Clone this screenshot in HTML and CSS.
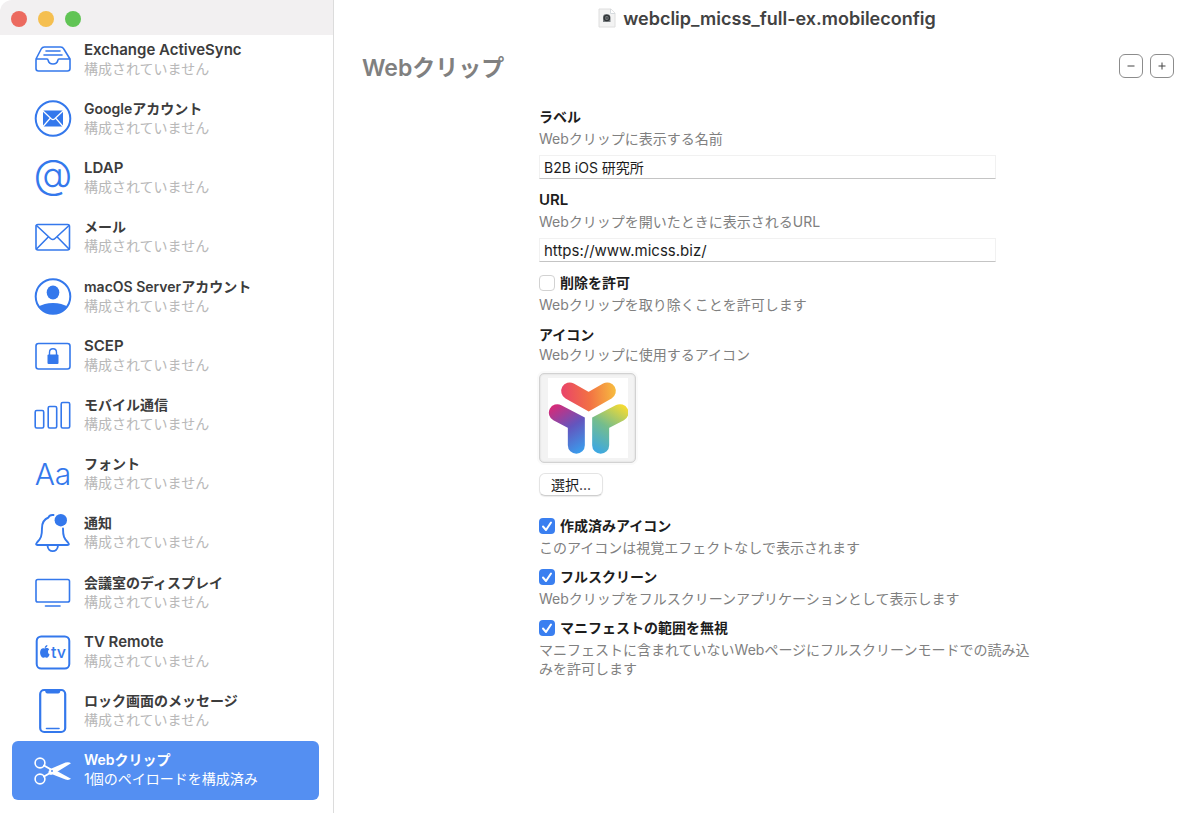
FILE: index.html
```
<!DOCTYPE html>
<html lang="ja">
<head>
  <meta charset="UTF-8" />
  <meta name="viewport" content="width=device-width, initial-scale=1.0" />
  <title>webclip_micss_full-ex.mobileconfig</title>
  <link rel="stylesheet" href="styles.css">
</head>
<body>
  <div class="window">
    <aside class="sidebar">
      <div class="titlebar">
        <button class="light close" aria-label="閉じる"></button>
        <button class="light minimize" aria-label="しまう"></button>
        <button class="light zoom" aria-label="拡大"></button>
      </div>
      <nav class="payloads">
        <a class="payload" href="#exchange">
          <svg class="icon" viewBox="0 0 40 46"><path d="M3 22L8.2 12Q9.2 10 11.4 10H27.6Q29.8 10 30.8 12L37 22V31.500Q37 34 34.500 34H5.500Q3 34 3 31.500V22H14Q15 22 15.200 23.500Q16 27 20 27Q24 27 24.800 23.500Q25 22 26 22H37M13 14H27M11 18H29"/></svg>
          <span class="text"><strong lang="en">Exchange ActiveSync</strong><small>構成されていません</small></span>
        </a>
        <a class="payload" href="#google">
          <svg class="icon" viewBox="0 0 40 46"><circle cx="20" cy="22.500" r="17.300" stroke-width="2"/><rect class="fill" x="10" y="14.500" width="20" height="16" rx="1"/><path class="knock" d="M10 15L18.500 23Q20 24.300 21.500 23L30 15M10 30.500L17 22.500M30 30.500L23 22.500"/></svg>
          <span class="text"><strong>Googleアカウント</strong><small>構成されていません</small></span>
        </a>
        <a class="payload" href="#ldap">
          <svg class="icon" viewBox="0 0 40 46"><text class="at" x="20" y="33" text-anchor="middle">@</text></svg>
          <span class="text"><strong lang="en">LDAP</strong><small>構成されていません</small></span>
        </a>
        <a class="payload" href="#mail">
          <svg class="icon" viewBox="0 0 40 46"><rect x="3" y="10.500" width="33.500" height="25.500" rx="2"/><path d="M3.500 11.500L17.500 24.500Q19.800 26.500 22 24.500L36 11.500M3.500 35L15.500 22.800M36 35L24 22.800"/></svg>
          <span class="text"><strong>メール</strong><small>構成されていません</small></span>
        </a>
        <a class="payload" href="#server">
          <svg class="icon" viewBox="0 0 40 46"><circle cx="20" cy="22.500" r="17.300" stroke-width="2"/><ellipse class="fill" cx="20" cy="18.500" rx="6.300" ry="7"/><path class="fill" d="M5.500 33C9 30.500 14 29 20 29S31 30.500 34.500 33C31 37.500 26 40 20 40S9 37.500 5.500 33Z"/></svg>
          <span class="text"><strong>macOS Serverアカウント</strong><small>構成されていません</small></span>
        </a>
        <a class="payload" href="#scep">
          <svg class="icon" viewBox="0 0 40 46"><rect x="3" y="10.500" width="34" height="25.500" rx="2.500"/><rect class="fill" x="14.500" y="21.500" width="11" height="9.500" rx="1"/><path stroke-width="1.400" d="M16.500 22V19.500C16.500 14.500 23.500 14.500 23.500 19.500V22"/></svg>
          <span class="text"><strong lang="en">SCEP</strong><small>構成されていません</small></span>
        </a>
        <a class="payload" href="#cellular">
          <svg class="icon" viewBox="0 0 40 46"><rect x="2.200" y="18.500" width="8.500" height="17.500" rx="1.500"/><rect x="15.200" y="14.500" width="8.500" height="21.500" rx="1.500"/><rect x="28.200" y="10.500" width="8.500" height="25.500" rx="1.500"/></svg>
          <span class="text"><strong>モバイル通信</strong><small>構成されていません</small></span>
        </a>
        <a class="payload" href="#font">
          <svg class="icon" viewBox="0 0 40 46"><text class="aa" x="20" y="34" text-anchor="middle">Aa</text></svg>
          <span class="text"><strong>フォント</strong><small>構成されていません</small></span>
        </a>
        <a class="payload" href="#notifications">
          <svg class="icon" viewBox="0 0 40 46"><path d="M20.500 5Q16.500 4.500 15.500 7.500C10.500 9.500 9 13.500 9 18C9 26 8 28.500 4 32.500Q2 35 4.500 35H34.500Q37 35 35 32.500C31 28.500 30 26 30 18.500M14.500 35.500C15 43 24.500 43 25 35.500" stroke-width="1.900"/><circle class="fill" cx="27.800" cy="10.200" r="6.200"/></svg>
          <span class="text"><strong>通知</strong><small>構成されていません</small></span>
        </a>
        <a class="payload" href="#display">
          <svg class="icon" viewBox="0 0 40 46"><rect x="3" y="9.500" width="33.500" height="22.500" rx="1.800"/><path d="M12.500 36H27"/></svg>
          <span class="text"><strong>会議室のディスプレイ</strong><small>構成されていません</small></span>
        </a>
        <a class="payload" href="#tvremote">
          <svg class="icon" viewBox="0 0 40 46"><rect x="3.700" y="7.500" width="32.600" height="32" rx="4.500" stroke-width="2"/><path class="fill" d="M11.800 19.500C13 18.800 15.200 18.800 16.200 20.300C14.400 21.700 14.600 24.500 16.600 25.500C15.900 27.400 14.800 29 13.500 28.700Q12 28 10.500 28.700C8.500 29.100 7 25.800 7.100 23.300C7.200 20 9.300 18.400 11.800 19.500ZM11.700 18.900C11.700 17.200 12.900 16 14.400 15.900C14.500 17.500 13.200 18.900 11.700 18.900Z"/><text class="tv" x="18" y="28.500">tv</text></svg>
          <span class="text"><strong lang="en">TV Remote</strong><small>構成されていません</small></span>
        </a>
        <a class="payload" href="#lockscreen">
          <svg class="icon" viewBox="0 0 40 46"><rect x="7.200" y="2" width="25" height="42" rx="4" stroke-width="2.200"/><path class="fill" d="M12 1.500H27.500Q27.500 5.500 25 5.500H14.500Q12 5.500 12 1.500Z"/><path d="M13.500 40.500H26"/></svg>
          <span class="text"><strong>ロック画面のメッセージ</strong><small>構成されていません</small></span>
        </a>
        <a class="payload selected" href="#webclip" aria-current="page">
          <svg class="icon" viewBox="0 0 40 46"><circle cx="7" cy="16" r="4.900"/><circle cx="7" cy="32" r="4.900"/><path d="M11 18.500L18 22.500M11 29.500L18 25.500" stroke-width="2"/><path class="fill" d="M15.500 27Q15 23.500 18.500 21.500L32.500 15.500Q36 14.500 38 16.200L23 25.500L18 28Z"/><path class="fill" d="M22 23L38 31.800Q36 33.600 32.500 32.600L18.500 27L15.500 21Z"/><circle class="dot" cx="19" cy="24" r="1"/></svg>
          <span class="text"><strong>Webクリップ</strong><small>1個のペイロードを構成済み</small></span>
        </a>
      </nav>
    </aside>

    <main class="main">
      <header class="doc-title">
        <svg class="doc-icon" viewBox="0 0 18 20"><path d="M1 1H13L17 5V19H1Z" fill="#f3f3f3" stroke="#dedede"/><path d="M12.500 1V5.500H17" fill="#fff" stroke="#d5dade"/><path d="M5 14V9Q5 6 8.500 6T12.500 9V14Z" fill="#7b8083"/><circle cx="8.800" cy="10" r="2.600" fill="none" stroke="#303436" stroke-width="1.400"/><path d="M7.500 10H10" stroke="#303436"/></svg>
        <h1>webclip_micss_full-ex.mobileconfig</h1>
      </header>
      <div class="section-head">
        <h2>Webクリップ</h2>
        <div class="tools">
          <button aria-label="ペイロードを削除"><svg viewBox="0 0 10 10"><path d="M1.500 5H8.500"/></svg></button>
          <button aria-label="ペイロードを追加"><svg viewBox="0 0 10 10"><path d="M1.500 5H8.500M5 1.500V8.500"/></svg></button>
        </div>
      </div>
      <form class="form">
        <div class="field">
          <label for="label">ラベル</label>
          <p>Webクリップに表示する名前</p>
          <input type="text" id="label" value="B2B iOS 研究所">
        </div>
        <div class="field">
          <label for="url" lang="en">URL</label>
          <p>Webクリップを開いたときに表示されるURL</p>
          <input type="url" id="url" lang="en" value="https://www.micss.biz/">
        </div>
        <div class="field">
          <label class="check"><input type="checkbox">削除を許可</label>
          <p>Webクリップを取り除くことを許可します</p>
        </div>
        <div class="field icon-field">
          <label for="choose">アイコン</label>
          <p>Webクリップに使用するアイコン</p>
          <div class="well">
            <svg viewBox="52 38 240 240" fill="none" stroke-width="51" stroke-linecap="round">
              <defs>
                <linearGradient id="top" gradientUnits="userSpaceOnUse" x1="92" y1="90" x2="256" y2="75"><stop offset="0" stop-color="#e9436a"/><stop offset=".5" stop-color="#f27044"/><stop offset="1" stop-color="#f7bd3f"/></linearGradient>
                <linearGradient id="left" gradientUnits="userSpaceOnUse" x1="65" y1="125" x2="150" y2="260"><stop offset="0" stop-color="#d52b79"/><stop offset=".5" stop-color="#6355be"/><stop offset="1" stop-color="#3a9cec"/></linearGradient>
                <linearGradient id="right" gradientUnits="userSpaceOnUse" x1="285" y1="125" x2="200" y2="260"><stop offset="0" stop-color="#f5db32"/><stop offset=".5" stop-color="#75bd8c"/><stop offset="1" stop-color="#3da8e2"/></linearGradient>
              </defs>
              <path stroke="url(#top)" d="M117 77L174 109L230 77"/>
              <path stroke="url(#left)" d="M80 142L137 172V240"/>
              <path stroke="url(#right)" d="M268 142L210 172V240"/>
            </svg>
          </div>
          <button type="button" id="choose" class="choose">選択...</button>
        </div>
        <div class="field">
          <label class="check"><input type="checkbox" checked>作成済みアイコン</label>
          <p>このアイコンは視覚エフェクトなしで表示されます</p>
        </div>
        <div class="field">
          <label class="check"><input type="checkbox" checked>フルスクリーン</label>
          <p>Webクリップをフルスクリーンアプリケーションとして表示します</p>
        </div>
        <div class="field">
          <label class="check"><input type="checkbox" checked>マニフェストの範囲を無視</label>
          <p>マニフェストに含まれていないWebページにフルスクリーンモードでの読み込みを許可します</p>
        </div>
      </form>
    </main>
  </div>
</body>
</html>
```
FILE: styles.css
```
:root {
  --blue: #3478ec;
  --selected: #548ff2;
  --gray: #808080;
}
* {
  box-sizing: border-box;
}
body {
  margin: 0;
  background: #fff;
  color: #1d1d1d;
  font-family: Inter, "Noto Sans CJK JP", sans-serif;
  font-size: 14px;
  line-height: 19px;
}
h1, h2, p {
  margin: 0;
}
button, input {
  font: inherit;
  color: inherit;
}
.window {
  display: flex;
  min-height: 100vh;
}

/* sidebar */
.sidebar {
  flex: 0 0 334px;
  display: flex;
  flex-direction: column;
  border-right: 1px solid #dcdcdc;
}
.titlebar {
  display: flex;
  align-items: center;
  gap: 11px;
  height: 35px;
  padding: 2px 11px 0;
  background: #f2f0f1;
  border-top-left-radius: 12px;
}
.light {
  width: 16px;
  height: 16px;
  padding: 0;
  border: none;
  border-radius: 50%;
}
.close {
  background: #ec6a5f;
}
.minimize {
  background: #f5bf50;
}
.zoom {
  background: #61c455;
}
.payloads {
  flex: 1;
  display: flex;
  flex-direction: column;
  margin-top: -5px;
  padding: 0 14px 13px 12px;
}
.payload {
  flex: 1;
  display: flex;
  align-items: center;
  gap: 11px;
  min-height: 48px;
  padding-left: 21px;
  border-radius: 6px;
  color: #3c3c3c;
  text-decoration: none;
}
.text {
  display: flex;
  flex-direction: column;
  padding-bottom: 2px;
  white-space: nowrap;
}
.text strong {
  font-weight: 600;
}
.text small {
  font-size: 14px;
  color: #b8b8b8;
}
strong:lang(en), label:lang(en), input:lang(en) {
  font-size: 15px;
}
.icon {
  width: 40px;
  height: 46px;
  overflow: visible;
  fill: none;
  stroke: var(--blue);
  stroke-width: 1.6;
  stroke-linecap: round;
  stroke-linejoin: round;
}
.icon .fill, .icon text {
  fill: var(--blue);
  stroke: none;
}
.icon .knock {
  stroke: #fff;
  stroke-width: 1.2;
}
.icon .at {
  font-size: 40px;
  font-weight: 300;
}
.icon .aa {
  font-size: 30px;
  font-weight: 300;
}
.icon .tv {
  font-size: 16px;
  font-weight: 500;
}
.selected {
  background: var(--selected);
  color: #fff;
}
.selected small {
  color: #fff;
}
.selected .icon {
  stroke: #fff;
}
.selected .icon .fill {
  fill: #fff;
}
.selected .icon .dot {
  fill: var(--selected);
  stroke: none;
}

/* payload editor */
.main {
  flex: 1;
  min-width: 0;
}
.doc-title {
  display: flex;
  align-items: center;
  justify-content: center;
  gap: 7px;
  height: 36px;
}
.doc-icon {
  width: 18px;
  height: 20px;
}
.doc-title h1 {
  font-size: 18px;
  font-weight: 600;
  color: #424242;
}
.section-head {
  display: flex;
  align-items: center;
  justify-content: space-between;
  height: 60px;
  padding: 0 26px 0 28px;
}
.section-head h2 {
  padding-top: 4px;
  font-size: 23px;
  font-weight: 600;
  line-height: 28px;
  color: var(--gray);
}
.tools {
  display: flex;
  gap: 7px;
}
.tools button {
  display: flex;
  align-items: center;
  justify-content: center;
  width: 24px;
  height: 24px;
  padding: 0;
  background: #fff;
  border: 1px solid #8c8c8c;
  border-radius: 6px;
}
.tools svg {
  width: 10px;
  height: 10px;
  stroke: #444;
}
.form {
  display: flex;
  flex-direction: column;
  gap: 10px;
  max-width: 696px;
  padding: 11px 0 24px 205px;
}
.field {
  display: flex;
  flex-direction: column;
  gap: 3px;
}
.field label {
  font-weight: 600;
}
.field p {
  color: var(--gray);
}
.field input[type=text], .field input[type=url] {
  width: 457px;
  max-width: 100%;
  height: 24px;
  margin: 4px 0 1px;
  padding: 0 4px;
  background: #fff;
  border: 1px solid #f1f1f1;
  border-bottom-color: #c4c4c4;
}
.check {
  display: flex;
  align-items: center;
  gap: 5px;
}
.check input {
  appearance: none;
  width: 16px;
  height: 16px;
  margin: 0;
  background: #fff;
  border: 1px solid #d2d2d2;
  border-radius: 4px;
}
.check input:checked {
  background: #3a7ff0 url("data:image/svg+xml,%3Csvg xmlns='http://www.w3.org/2000/svg' viewBox='0 0 16 16'%3E%3Cpath d='M4 8.500L7 12L12 4.500' fill='none' stroke='white' stroke-width='2' stroke-linecap='round' stroke-linejoin='round'/%3E%3C/svg%3E");
  border: none;
}
.icon-field {
  gap: 1px;
  padding: 1px 0 10px;
}
.well {
  display: flex;
  align-items: center;
  justify-content: center;
  width: 97px;
  height: 90px;
  margin-top: 8px;
  background: #f3f3f3;
  border: 1px solid #d2d2d2;
  border-radius: 5px;
  box-shadow: inset 0 0 2px #00000026, 0 0 0 2px #fafafa;
}
.well svg {
  width: 80px;
  height: 80px;
  background: #fff;
}
.choose {
  align-self: flex-start;
  height: 23px;
  margin-top: 9px;
  padding: 0 11px;
  background: #fff;
  border: 1px solid #e4e4e4;
  border-bottom-color: #cfcfcf;
  border-radius: 6px;
  box-shadow: 0 1px 1px #00000014;
}
```
